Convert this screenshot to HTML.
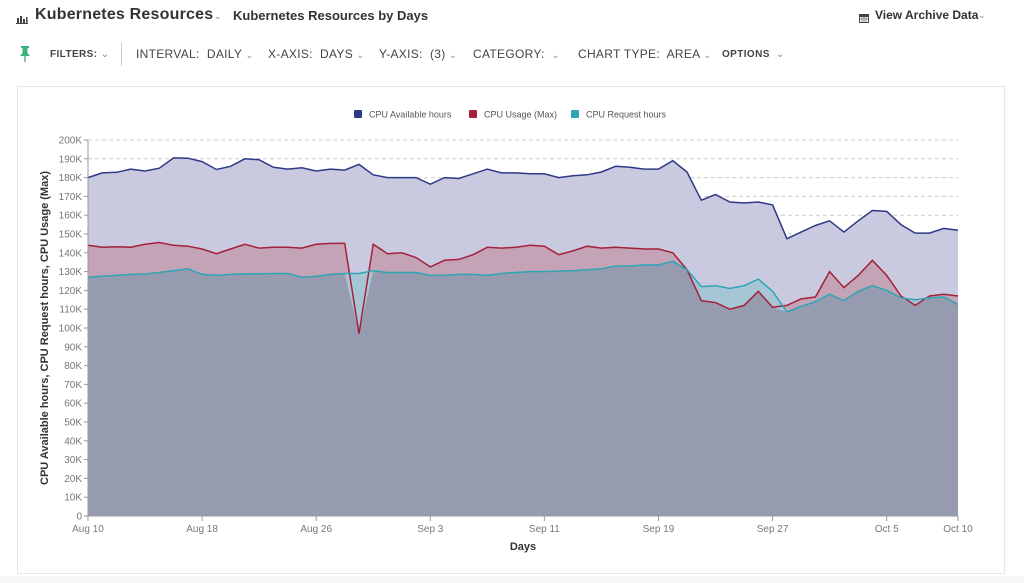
<!DOCTYPE html>
<html><head><meta charset="utf-8"><style>
body{margin:0;width:1024px;height:583px;background:#fff;font-family:"Liberation Sans",sans-serif;overflow:hidden;position:relative;color:#333}
.a{position:absolute;white-space:nowrap}
.t{font-size:12px;color:#444;letter-spacing:.3px}
.c{font-size:9px;color:#888}
</style></head><body>
<div class="a" style="left:16px;top:11px;width:12px;height:10px">
<svg width="12" height="10"><rect x="0" y="9" width="12" height="1" fill="#444"/><rect x="1" y="4" width="2" height="5" fill="#444"/><rect x="4" y="2" width="2" height="7" fill="#444"/><rect x="7" y="5" width="2" height="4" fill="#444"/><rect x="10" y="3" width="1.5" height="6" fill="#444"/></svg></div>
<div class="a" style="left:35px;top:6px;font-size:16px;font-weight:bold;color:#333;letter-spacing:.2px">Kubernetes Resources</div>
<div class="a c" style="left:214px;top:11px">⌄</div>
<div class="a" style="left:233px;top:8px;font-size:13px;font-weight:bold;color:#333">Kubernetes Resources by Days</div>
<div class="a" style="left:859px;top:10px;width:10px;height:10px"><svg width="10" height="10"><rect x=".5" y="1.5" width="9" height="8" fill="none" stroke="#444"/><rect x=".5" y="1.5" width="9" height="2.5" fill="#444"/><path d="M3 4v5M5 4v5M7 4v5M1 6h8" stroke="#444" stroke-width=".6"/></svg></div>
<div class="a" style="left:875px;top:8px;font-size:12px;font-weight:bold;color:#333">View Archive Data</div>
<div class="a c" style="left:978px;top:10px">⌄</div>
<div class="a" style="left:18px;top:45px"><svg width="14" height="18"><path d="M3 1h8v2h-1.5v5l2.5 3H2l2.5-3V3H3z" fill="#3db37c"/><rect x="6.3" y="11" width="1.4" height="6" fill="#3db37c"/></svg></div>
<div class="a" style="left:50px;top:49px;font-size:10px;font-weight:bold;color:#444;letter-spacing:.4px">FILTERS: <span style="font-weight:normal;color:#888">⌄</span></div>
<div class="a" style="left:121px;top:42px;width:1px;height:24px;background:#ccc"></div>
<div class="a t" style="left:136px;top:47px">INTERVAL:&nbsp; DAILY <span class="c">⌄</span></div>
<div class="a t" style="left:268px;top:47px">X-AXIS:&nbsp; DAYS <span class="c">⌄</span></div>
<div class="a t" style="left:379px;top:47px">Y-AXIS:&nbsp; (3) <span class="c">⌄</span></div>
<div class="a t" style="left:473px;top:47px">CATEGORY: &nbsp;<span class="c">⌄</span></div>
<div class="a t" style="left:578px;top:47px">CHART TYPE:&nbsp; AREA <span class="c">⌄</span></div>
<div class="a" style="left:722px;top:49px;font-size:10px;font-weight:bold;color:#444;letter-spacing:.4px">OPTIONS &nbsp;<span style="font-weight:normal;color:#888">⌄</span></div>
<div class="a" style="left:17px;top:86px;width:988px;height:488px;border:1px solid #e6e6e6;box-sizing:border-box"></div>
<div class="a" style="left:0;top:576px;width:1024px;height:7px;background:#f7f7f7"></div>
<svg id="ch" class="a" style="left:0;top:0" width="1024" height="583"></svg>
<script>
var B=[180,182.5,182.8,184.5,183.5,185,190.5,190.3,188.5,184.3,186,190,189.5,185.5,184.5,185.2,183.5,184.5,184,187,181.5,180,180,180,176.5,180,179.5,182,184.5,182.5,182.5,182,182,180,181,181.5,183,186,185.5,184.5,184.5,189,183,168,171,167,166.5,167,165.5,147.5,151,154.5,157,151,157,162.5,162,155,150.5,150.5,153,152];
var R=[144,143,143.2,143,144.5,145.5,144,143.5,142,139.5,142,144.5,142.5,143,143,142.5,144.5,145,145,97,144.5,139.5,140,137.5,132.5,136,136.5,139,143,142.5,143,144,143.5,139,141,143.5,142.5,143,142.5,142,142,140,131,114.5,113.5,110,112,119.5,111,112,115.5,116.5,130,121.5,128,136,128,117,112,117,118,117];
var C=[127,127.5,128,128.5,128.7,129.5,130.5,131.5,128.5,128,128.5,128.8,128.8,129,129,127,127.5,128.5,129,129,130.5,129.5,129.5,129.5,128,128,128.5,128.5,128,129,129.5,130,130,130.3,130.5,131,131.5,133,133,133.5,133.5,135.5,131,122,122.5,121,122.5,126,119.5,108.5,111.5,114,118,114.5,119.5,122.5,120,116,115,116,116.5,112.5];
var M=R.map(function(v,i){return Math.min(v,C[i])});
function X(i){return 88+i*870/61}function Y(v){return 516-v*1.88}
function pts(a){return a.map(function(v,i){return X(i).toFixed(1)+','+Y(v).toFixed(1)}).join(' ')}
function area(a,f){return '<polygon points="88,516 '+pts(a)+' 958,516" fill="'+f+'"/>'}
var s='';
for(var k=0;k<=20;k++){var y=Y(k*10);
 if(k>0)s+='<line x1="88" x2="958" y1="'+y+'" y2="'+y+'" stroke="#ccc" stroke-dasharray="4,3"/>';
 s+='<line x1="84" x2="88" y1="'+y+'" y2="'+y+'" stroke="#999"/>';
 s+='<text x="82" y="'+(y+3.5)+'" text-anchor="end" font-size="10" fill="#777">'+(k?k*10+'K':'0')+'</text>';}
s+=area(B,'#c9cadf')+area(R,'#c4a3b6')+area(C,'#a6c6d6')+area(M,'#979bb0');
s+='<polyline points="'+pts(B)+'" fill="none" stroke="#2e3a87" stroke-width="1.5"/>';
s+='<polyline points="'+pts(R)+'" fill="none" stroke="#a5203a" stroke-width="1.5"/>';
s+='<polyline points="'+pts(C)+'" fill="none" stroke="#2ca5b5" stroke-width="1.5"/>';
s+='<line x1="88" x2="88" y1="140" y2="516" stroke="#999"/><line x1="88" x2="958" y1="516" y2="516" stroke="#999"/>';
var L=[[0,'Aug 10'],[8,'Aug 18'],[16,'Aug 26'],[24,'Sep 3'],[32,'Sep 11'],[40,'Sep 19'],[48,'Sep 27'],[56,'Oct 5'],[61,'Oct 10']];
L.forEach(function(l){var x=X(l[0]);s+='<line x1="'+x+'" x2="'+x+'" y1="516" y2="521" stroke="#999"/><text x="'+x+'" y="532" text-anchor="middle" font-size="10" fill="#777">'+l[1]+'</text>'});
s+='<text x="523" y="550" text-anchor="middle" font-size="11" font-weight="bold" fill="#333">Days</text>';
s+='<text transform="translate(48,328) rotate(-90)" text-anchor="middle" font-size="11" font-weight="bold" fill="#333">CPU Available hours, CPU Request hours, CPU Usage (Max)</text>';
[[354,'#2e3a87','CPU Available hours'],[469,'#a5203a','CPU Usage (Max)'],[571,'#2ca5b5','CPU Request hours']].forEach(function(l){s+='<rect x="'+l[0]+'" y="110" width="8" height="8" rx="1" fill="'+l[1]+'"/><text x="'+(l[0]+15)+'" y="117.5" font-size="9" fill="#555">'+l[2]+'</text>'});
document.getElementById('ch').innerHTML=s;
</script>
</body></html>
